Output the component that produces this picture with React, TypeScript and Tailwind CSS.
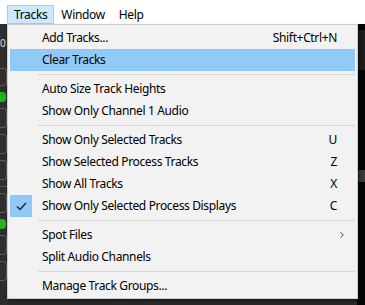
import { ChevronRight } from 'lucide-react'

type Item =
  | { kind: 'item'; label: string; shortcut?: string; active?: boolean; checked?: boolean; submenu?: boolean }
  | { kind: 'sep' }

const items: Item[] = [
  { kind: 'item', label: 'Add Tracks...', shortcut: 'Shift+Ctrl+N' },
  { kind: 'item', label: 'Clear Tracks', active: true },
  { kind: 'sep' },
  { kind: 'item', label: 'Auto Size Track Heights' },
  { kind: 'item', label: 'Show Only Channel 1 Audio' },
  { kind: 'sep' },
  { kind: 'item', label: 'Show Only Selected Tracks', shortcut: 'U' },
  { kind: 'item', label: 'Show Selected Process Tracks', shortcut: 'Z' },
  { kind: 'item', label: 'Show All Tracks', shortcut: 'X' },
  { kind: 'item', label: 'Show Only Selected Process Displays', shortcut: 'C', checked: true },
  { kind: 'sep' },
  { kind: 'item', label: 'Spot Files', submenu: true },
  { kind: 'item', label: 'Split Audio Channels' },
  { kind: 'sep' },
  { kind: 'item', label: 'Manage Track Groups...' },
]

function MenuRow({ item }: { item: Extract<Item, { kind: 'item' }> }) {
  return (
    <div
      className={`relative mx-[2px] flex h-[22px] items-center pl-[32px] pr-[18px] ${
        item.active ? 'bg-[#91c9f7]' : ''
      }`}
    >
      {item.checked && (
        <div className="absolute left-0 top-0 flex h-[22px] w-[22px] items-center justify-center bg-[#90c8f7]">
          <svg width="11" height="9" viewBox="0 0 11 9" fill="none">
            <path d="M1 4.5 L4 7.5 L10 1" stroke="#2b2b2b" strokeWidth="1.5" />
          </svg>
        </div>
      )}
      <span className="flex-1 whitespace-nowrap">{item.label}</span>
      {item.shortcut && <span className="whitespace-nowrap">{item.shortcut}</span>}
      {item.submenu && (
        <ChevronRight className="absolute right-[8px] top-[6px] h-[10px] w-[10px] text-[#222]" strokeWidth={2} />
      )}
    </div>
  )
}

export default function App() {
  return (
    <div
      className="relative flex h-[305px] w-[365px] flex-col overflow-hidden bg-[#141414] text-[12px] tracking-[-0.35px] text-black"
      style={{ fontFamily: '"Noto Sans", "Liberation Sans", sans-serif' }}
    >
      {/* menu bar */}
      <div className="flex h-[24px] items-end bg-white pl-[7px]">
        <div className="flex h-[19px] items-center border border-[#99d1ff] bg-[#cce8ff] px-[6px]">Tracks</div>
        <div className="flex h-[19px] items-center px-[7px]">Window</div>
        <div className="flex h-[19px] items-center px-[7px]">Help</div>
      </div>

      {/* app content behind the menu */}
      <div className="flex flex-1">
        <div className="flex w-[8px] flex-col gap-[6px] bg-[#2e2e2e] pt-[14px] text-[10px] text-[#ddd]">
          <span className="leading-none">0</span>
          <div className="mt-[14px] h-[18px] w-[7px] rounded-r-[4px] border border-l-0 border-[#5a5a5a]" />
          <div className="h-[10px] w-[6px] rounded-r-[4px] bg-[#1fb31f]" />
          <div className="h-[20px] w-[7px] rounded-r-[4px] border border-l-0 border-[#5a5a5a]" />
          <div className="h-[20px] w-[7px] rounded-r-[4px] border border-l-0 border-[#5a5a5a]" />
          <div className="h-[20px] w-[7px] rounded-r-[4px] border border-l-0 border-[#5a5a5a]" />
          <div className="h-[1px] w-[8px] bg-[#555]" />
          <div className="h-[20px] w-[7px] rounded-r-[4px] border border-l-0 border-[#5a5a5a]" />
          <div className="h-[10px] w-[6px] rounded-r-[4px] bg-[#1fb31f]" />
          <div className="h-[20px] w-[7px] rounded-r-[4px] border border-l-0 border-[#5a5a5a]" />
          <div className="h-[20px] w-[7px] rounded-r-[4px] border border-l-0 border-[#5a5a5a]" />
        </div>
        <div className="flex-1 bg-[#2a2a2a]" />
        <div className="flex w-[8px] flex-col bg-[#050505]">
          <div className="mt-[6px] h-[40px] bg-[#1e1e1e]" />
          <div className="mt-[100px] h-[12px] bg-[#3a3a3a]" />
        </div>
      </div>

      {/* dropdown */}
      <div className="absolute left-[7px] top-[24px] h-[275px] w-[351px] border border-[#cccccc] bg-[#f2f2f2] pb-[1px] pt-[2px] shadow-[2px_2px_3px_rgba(0,0,0,0.45)]">
        {items.map((item, i) =>
          item.kind === 'sep' ? (
            <div key={i} className="mx-[2px] flex h-[7px] items-center pl-[28px]">
              <div className="h-[1px] w-full bg-[#d7d7d7]" />
            </div>
          ) : (
            <MenuRow key={i} item={item} />
          ),
        )}
      </div>
    </div>
  )
}
